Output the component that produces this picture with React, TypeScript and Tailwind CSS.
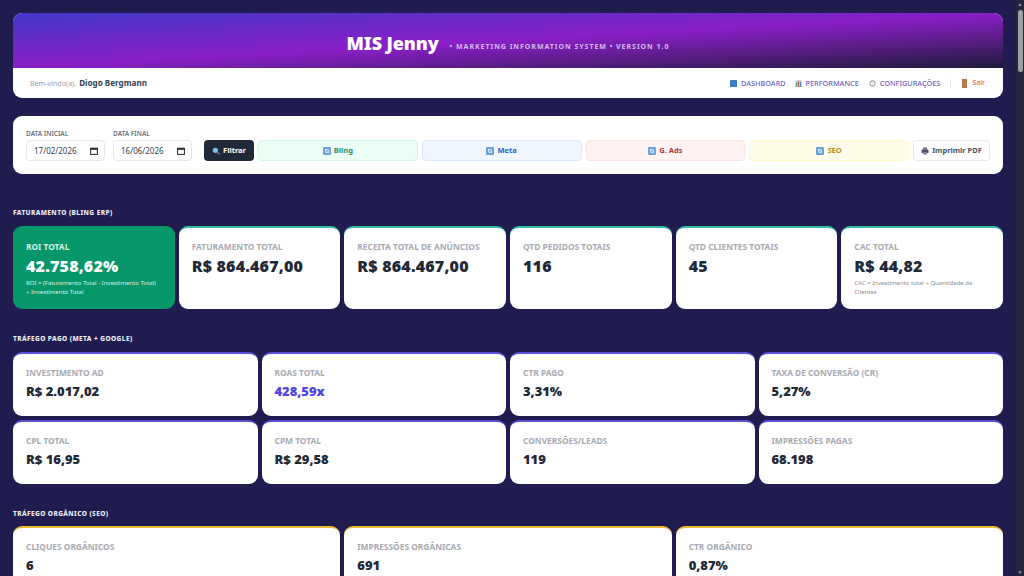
import React from "react";

function Blue() {
  return (
    <svg width="8" height="8" viewBox="0 0 8 8" className="shrink-0">
      <rect width="8" height="8" rx="1" fill="#6aa3dc" />
      <rect x="2" y="2" width="4" height="4" fill="#cfe3f6" />
      <path d="M2.5 5.5 5.5 2.5" stroke="#4d8ccb" strokeWidth="1" />
    </svg>
  );
}

function Card({ label, value, note, top, big, green, valueClass }: { label: string; value: string; note?: string; top: string; big?: boolean; green?: boolean; valueClass?: string }) {
  return (
    <div className={`rounded-[9px] border-t-2 px-[13px] pt-[13px] ${big ? "h-[83px]" : "h-[64px]"} ${green ? "bg-[#059669] border-[#059669]" : "bg-white"} ${top}`}>
      <div className={`text-[8.4px] leading-[12px] font-bold whitespace-nowrap ${green ? "text-[#d5f0e6]" : "text-[#a8abb3]"}`}>{label}</div>
      <div className={`font-black whitespace-nowrap ${big ? "text-[16px] leading-[22px] mt-[2px] tracking-[0.2px]" : "text-[13px] leading-[18px] mt-[3px]"} ${green ? "text-white" : valueClass ?? "text-[#1f2937]"}`}>{value}</div>
      {note && <div className={`text-[6px] leading-[9px] mt-[2px] ${green ? "text-[#d5f0e6]" : "text-[#8b8e96]"}`}>{note}</div>}
    </div>
  );
}

function Section({ children }: { children: React.ReactNode }) {
  return <div className="text-[6.5px] leading-[8px] font-extrabold tracking-[0.42px] text-[#eef0f8] uppercase">{children}</div>;
}

function DateField({ label, value }: { label: string; value: string }) {
  return (
    <div className="flex flex-col gap-[1px]">
      <span className="text-[6.5px] leading-[10px] font-semibold text-[#6b7280]">{label}</span>
      <div className="w-[79px] h-[21px] rounded-[4px] border border-[#e5e7eb] bg-white pl-[7px] pr-[6px] flex items-center justify-between text-[8px] text-[#374151]">
        <span>{value}</span>
        <svg width="8" height="8" viewBox="0 0 8 8" fill="none"><rect x="0.6" y="1.2" width="6.8" height="6.2" stroke="#222" strokeWidth="1" /><rect x="0.6" y="1.2" width="6.8" height="1.6" fill="#222" /></svg>
      </div>
    </div>
  );
}

function Source({ name, cls }: { name: string; cls: string }) {
  return (
    <div className={`flex-1 h-[21px] rounded-[4px] border flex items-center justify-center gap-[3px] text-[7.5px] font-bold ${cls}`}>
      <Blue />
      <span>{name}</span>
    </div>
  );
}

export default function App() {
  return (
    <div className="h-[576px] w-[1024px] overflow-hidden flex bg-[#201c50] font-['Noto_Sans','Open_Sans',sans-serif]">
      <main className="flex-1 min-w-0 px-[13px] pt-[13px]">
        <header className="rounded-[9px] overflow-hidden bg-white">
          <div className="h-[55px] flex items-baseline justify-center gap-[11px] pt-[17px] bg-[linear-gradient(to_bottom_right,#4338ca,#8a1fc7,#1f1b3a)]">
            <span className="text-[18px] font-black text-white tracking-[-0.1px]">MIS Jenny</span>
            <span className="text-[7px] font-bold tracking-[0.97px] text-[#d4bdf0] -translate-y-[1.5px]">• MARKETING INFORMATION SYSTEM • VERSION 1.0</span>
          </div>
          <div className="h-[30px] flex items-center justify-between pl-[17px] pr-[18px]">
            <div className="flex items-center gap-[3px]">
              <span className="text-[7.1px] text-[#9ca3af]">Bem-vindo(a),</span>
              <span className="text-[8.1px] font-bold text-[#374151]">Diogo Bergmann</span>
            </div>
            <nav className="flex items-center text-[7.3px] text-[#6a66c4] font-medium">
              <span className="flex items-center gap-[4px]">
                <svg width="7" height="7" viewBox="0 0 8 8"><rect width="8" height="8" rx="0.7" fill="#3f7cc8" /></svg>
                DASHBOARD
              </span>
              <span className="flex items-center gap-[4px] ml-[9px]">
                <svg width="7" height="7" viewBox="0 0 8 8"><rect width="8" height="8" fill="#d9dde3" /><rect x="1" y="3" width="1.5" height="5" fill="#5aa469" /><rect x="3.2" y="1" width="1.5" height="7" fill="#c0645c" /><rect x="5.5" y="2" width="1.5" height="6" fill="#4f7fc4" /></svg>
                PERFORMANCE
              </span>
              <span className="flex items-center gap-[4px] ml-[10px]">
                <svg width="7" height="7" viewBox="0 0 8 8"><circle cx="4" cy="4" r="3" fill="none" stroke="#9aa0a8" strokeWidth="1.2" /><circle cx="4" cy="4" r="1" fill="#c4c8ce" /></svg>
                CONFIGURAÇÕES
              </span>
              <span className="w-px h-[8px] bg-[#e5e7eb] ml-[10px]" />
              <span className="flex items-center gap-[4px] ml-[11px] text-[7px] text-[#e0696b]">
                <svg width="6" height="9" viewBox="0 0 6 9"><rect width="5" height="9" fill="#b9774f" /><rect x="3.4" y="4" width="0.9" height="1" fill="#e7c9a8" /></svg>
                Sair
              </span>
            </nav>
          </div>
        </header>

        <section className="mt-[18px] h-[58px] rounded-[9px] bg-white flex items-end gap-[4px] pl-[13px] pr-[13px] pb-[13px]">
          <DateField label="DATA INICIAL" value="17/02/2026" />
          <div className="ml-[4px]">
            <DateField label="DATA FINAL" value="16/06/2026" />
          </div>
          <div className="ml-[8px] w-[50px] h-[21px] rounded-[4px] bg-[#1f2937] flex items-center justify-center gap-[3px] text-[7.5px] font-bold text-white">
            <svg width="8" height="8" viewBox="0 0 8 8"><circle cx="3.3" cy="3.3" r="2.6" fill="#7cc4ee" /><path d="M5.2 5.2 7.5 7.5" stroke="#8a6fb0" strokeWidth="1.3" /></svg>
            Filtrar
          </div>
          <Source name="Bling" cls="bg-[#ecfdf5] border-[#d1fae5] text-[#2f8f63]" />
          <Source name="Meta" cls="bg-[#eff6ff] border-[#dbeafe] text-[#2b62bd]" />
          <Source name="G. Ads" cls="bg-[#fef2f2] border-[#fee2e2] text-[#b23a3a]" />
          <Source name="SEO" cls="bg-[#fefce8] border-[#fef9c3] text-[#b8902a]" />
          <div className="w-[77px] h-[21px] rounded-[4px] border border-[#e5e7eb] bg-white flex items-center justify-center gap-[3px] text-[7.5px] font-bold text-[#4b5563]">
            <svg width="8" height="8" viewBox="0 0 8 8"><rect x="2" y="0.5" width="4" height="2" fill="#6b6f86" /><rect x="0.5" y="2.5" width="7" height="3.5" rx="0.6" fill="#4b4f6b" /><rect x="2" y="5" width="4" height="2.5" fill="#7f8398" /></svg>
            Imprimir PDF
          </div>
        </section>

        <div className="mt-[35px]">
          <Section>Faturamento (Bling ERP)</Section>
        </div>
        <div className="mt-[9px] grid grid-cols-6 gap-[4px]">
          <Card big green top="" label="ROI TOTAL" value="42.758,62%" note={"ROI = (Faturamento Total - Investimento Total) ÷\u00A0Investimento Total"} />
          <Card big top="border-[#2fbfa3]" label="FATURAMENTO TOTAL" value="R$ 864.467,00" />
          <Card big top="border-[#2fbfa3]" label="RECEITA TOTAL DE ANÚNCIOS" value="R$ 864.467,00" />
          <Card big top="border-[#2fbfa3]" label="QTD PEDIDOS TOTAIS" value="116" />
          <Card big top="border-[#2fbfa3]" label="QTD CLIENTES TOTAIS" value="45" />
          <Card big top="border-[#2fbfa3]" label="CAC TOTAL" value="R$ 44,82" note="CAC = Investimento total ÷ Quantidade de Clientes" />
        </div>

        <div className="mt-[26px]">
          <Section>Tráfego Pago (Meta + Google)</Section>
        </div>
        <div className="mt-[9px] grid grid-cols-4 gap-[4px]">
          <Card top="border-[#5b50d6]" label="INVESTIMENTO AD" value="R$ 2.017,02" />
          <Card top="border-[#5b50d6]" label="ROAS TOTAL" value="428,59x" valueClass="text-[#4f46e5]" />
          <Card top="border-[#5b50d6]" label="CTR PAGO" value="3,31%" />
          <Card top="border-[#5b50d6]" label="TAXA DE CONVERSÃO (CR)" value="5,27%" />
          <Card top="border-[#5b50d6]" label="CPL TOTAL" value="R$ 16,95" />
          <Card top="border-[#5b50d6]" label="CPM TOTAL" value="R$ 29,58" />
          <Card top="border-[#5b50d6]" label="CONVERSÕES/LEADS" value="119" />
          <Card top="border-[#5b50d6]" label="IMPRESSÕES PAGAS" value="68.198" />
        </div>

        <div className="mt-[26px]">
          <Section>Tráfego Orgânico (SEO)</Section>
        </div>
        <div className="mt-[8px] grid grid-cols-3 gap-[4px]">
          <Card top="border-[#e8b931]" label="CLIQUES ORGÂNICOS" value="6" />
          <Card top="border-[#e8b931]" label="IMPRESSÕES ORGÂNICAS" value="691" />
          <Card top="border-[#e8b931]" label="CTR ORGÂNICO" value="0,87%" />
        </div>
      </main>
      <aside className="w-[8px] h-full bg-[#26263a] flex flex-col items-center">
        <span className="text-[5px] leading-[8px] text-[#a0a0a4]">▲</span>
        <div className="w-[5px] h-[62px] mt-[2px] rounded-full bg-[#a0a0a4]" />
        <span className="mt-auto text-[5px] leading-[8px] text-[#a0a0a4]">▼</span>
      </aside>
    </div>
  );
}
